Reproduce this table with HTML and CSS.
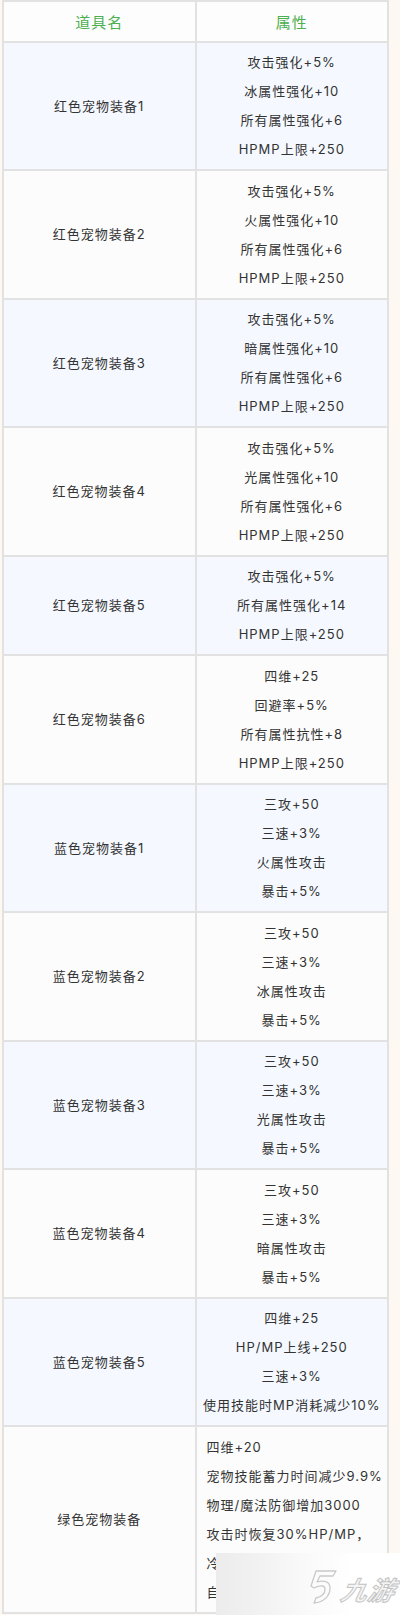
FILE: index.html
```html
<!DOCTYPE html>
<html lang="zh-CN">
<head>
<meta charset="utf-8">
<title>宠物装备属性</title>
<link rel="stylesheet" href="styles.css">
</head>
<body>
<div class="page">
  <table class="equip">
    <thead>
      <tr><th>道具名</th><th>属性</th></tr>
    </thead>
    <tbody>
      <tr class="alt"><td class="name">红色宠物装备1</td><td class="attr"><p>攻击强化+5%</p><p>冰属性强化+10</p><p>所有属性强化+6</p><p>HPMP上限+250</p></td></tr>
      <tr><td class="name">红色宠物装备2</td><td class="attr"><p>攻击强化+5%</p><p>火属性强化+10</p><p>所有属性强化+6</p><p>HPMP上限+250</p></td></tr>
      <tr class="alt"><td class="name">红色宠物装备3</td><td class="attr"><p>攻击强化+5%</p><p>暗属性强化+10</p><p>所有属性强化+6</p><p>HPMP上限+250</p></td></tr>
      <tr><td class="name">红色宠物装备4</td><td class="attr"><p>攻击强化+5%</p><p>光属性强化+10</p><p>所有属性强化+6</p><p>HPMP上限+250</p></td></tr>
      <tr class="alt"><td class="name">红色宠物装备5</td><td class="attr"><p>攻击强化+5%</p><p>所有属性强化+14</p><p>HPMP上限+250</p></td></tr>
      <tr><td class="name">红色宠物装备6</td><td class="attr"><p>四维+25</p><p>回避率+5%</p><p>所有属性抗性+8</p><p>HPMP上限+250</p></td></tr>
      <tr class="alt"><td class="name">蓝色宠物装备1</td><td class="attr"><p>三攻+50</p><p>三速+3%</p><p>火属性攻击</p><p>暴击+5%</p></td></tr>
      <tr><td class="name">蓝色宠物装备2</td><td class="attr"><p>三攻+50</p><p>三速+3%</p><p>冰属性攻击</p><p>暴击+5%</p></td></tr>
      <tr class="alt"><td class="name">蓝色宠物装备3</td><td class="attr"><p>三攻+50</p><p>三速+3%</p><p>光属性攻击</p><p>暴击+5%</p></td></tr>
      <tr><td class="name">蓝色宠物装备4</td><td class="attr"><p>三攻+50</p><p>三速+3%</p><p>暗属性攻击</p><p>暴击+5%</p></td></tr>
      <tr class="alt"><td class="name">蓝色宠物装备5</td><td class="attr"><p>四维+25</p><p>HP/MP上线+250</p><p>三速+3%</p><p>使用技能时MP消耗减少10%</p></td></tr>
      <tr><td class="name">绿色宠物装备</td><td class="attr attr-left"><p>四维+20</p><p>宠物技能蓄力时间减少9.9%</p><p>物理/魔法防御增加3000</p><p>攻击时恢复30%HP/MP，</p><p>冷却时间30秒</p><p>自动拾取道具</p></td></tr>
    </tbody>
  </table>

  <div class="watermark">
    <svg class="wm-mark" viewBox="0 0 30 36" width="30" height="36" aria-hidden="true">
      <path d="M8 2 H28 L25 7 H12 L9 13 C15 11 22 12 22 19 C22 27 16 33 6 34 L8 29 C13 28 17 25 17 20 C17 16 12 16 6 19 L3 17 Z" fill="none" stroke="#c9c9c9" stroke-width="1.3" stroke-linejoin="round"/>
    </svg>
    <span class="wm-text">九游</span>
  </div>
</div>
</body>
</html>
```

FILE: styles.css
```css
html, body {
  margin: 0;
  padding: 0;
}

body {
  background: #fdf8f2;
  font-family: "Inter", "Noto Sans CJK SC", sans-serif;
  color: #333333;
}

.page {
  position: relative;
  width: 400px;
  height: 1615px;
  overflow: hidden;
}

.equip {
  margin-left: 2px;
  width: 387px;
  border-collapse: collapse;
  table-layout: fixed;
  border: 2px solid #e2e2e2;
}

.equip th,
.equip td {
  border: 2px solid #e2e2e2;
  padding: 5.5px 4px 5px;
  text-align: center;
  vertical-align: middle;
  white-space: nowrap;
}

.equip th {
  background: #fdfdfd;
  color: #4caf50;
  font-family: "Noto Sans CJK SC", sans-serif;
  font-size: 15px;
  font-weight: 400;
  letter-spacing: 1px;
  line-height: 28px;
  width: 50%;
}

.equip td {
  background: #fcfcfc;
  font-size: 13px;
  letter-spacing: 1px;
  line-height: 29px;
}

.equip tr.alt td {
  background: #f5f9ff;
}

.attr p {
  margin: 0;
}

.attr-left {
  text-align: left !important;
  padding-left: 10px !important;
}

.watermark {
  position: absolute;
  left: 216px;
  top: 1553px;
  width: 184px;
  height: 62px;
  background: linear-gradient(90deg, #ececec 0%, #f2f2f2 25%, #fafafa 50%, #ffffff 75%);
  display: flex;
  align-items: center;
  justify-content: flex-end;
  gap: 4px;
  padding-right: 4px;
  box-sizing: border-box;
}

.wm-mark {
  margin-top: 6px;
}

.wm-text {
  font-family: "Noto Sans CJK SC", sans-serif;
  font-size: 26px;
  font-weight: 700;
  font-style: italic;
  color: #f4f4f4;
  -webkit-text-stroke: 1px #c4c4c4;
  letter-spacing: 1px;
  transform: skewX(-12deg);
  margin-top: 8px;
}
```
